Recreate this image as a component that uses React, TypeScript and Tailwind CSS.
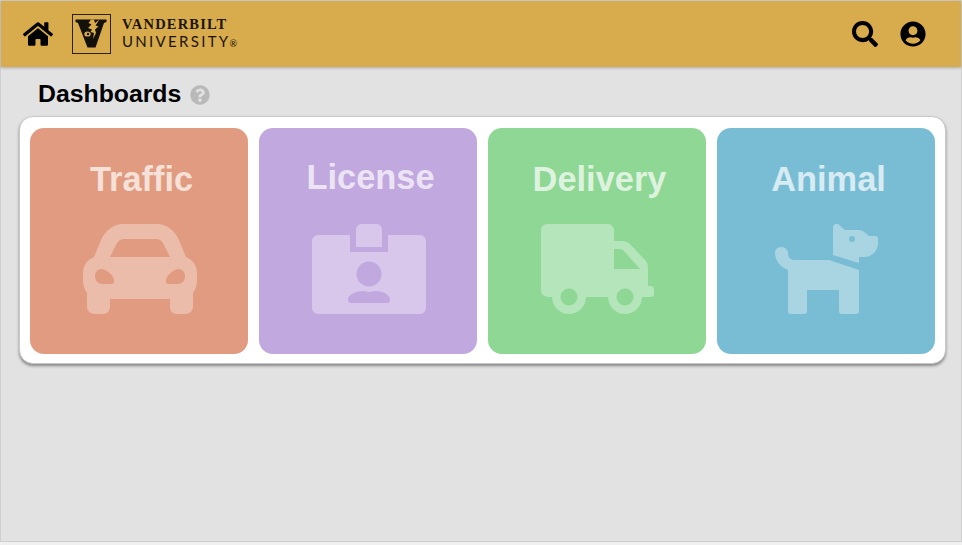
import React from "react";
import { FaHome, FaSearch, FaUserCircle, FaQuestionCircle } from "react-icons/fa";

const sans = "font-['Liberation_Sans',Arial,sans-serif]";

function VuLogo() {
  return (
    <div className="w-[39px] h-[40px] border-[1.5px] border-[#2a2110] shrink-0">
      <svg width="36" height="37" viewBox="0 0 36 37">
        <path d="M2.500 4.500H33.500V7L31 8L22.500 32.500H14.500L5 8L2.500 7Z" fill="#14100a" />
        <path d="M18 4.500L15.500 8L18.500 9.500L15 13L19 14.500L17.500 17L21 18L20 24L23 18L22 14.500L25.500 11.500L22.500 10.500L26.500 4.500L22 8L21 4.500Z" fill="#D8AB4C" />
        <ellipse cx="14.500" cy="19" rx="3.200" ry="2.600" fill="#D8AB4C" />
        <circle cx="15" cy="19" r="1.200" fill="#14100a" />
      </svg>
    </div>
  );
}

function CarIcon() {
  return (
    <svg width="114" height="90" viewBox="0 0 114 90">
      <path
        fillRule="evenodd"
        fill="#ECBCAB"
        d="M40 0H74C84 0 92 7 96 16L103 33C110 36 114 42 114 49V56C114 62 112 66 110 69V82C110 87 107 90 102 90H94C89 90 87 87 87 82V75H27V82C27 87 24 90 20 90H12C7 90 4 87 4 82V69C2 66 0 62 0 56V49C0 42 4 36 11 33L18 16C22 7 30 0 40 0ZM27 33H87L81 21C79 17 77 15 72 15H42C37 15 35 17 33 21ZM12 52C12 48 15 45 18 45C24 45 31 52 31 57C31 59 30 60 28 60H20C15 60 12 57 12 52ZM102 52C102 48 99 45 96 45C90 45 83 52 83 57C83 59 84 60 86 60H94C99 60 102 57 102 52Z"
      />
    </svg>
  );
}

function BadgeIcon() {
  return (
    <svg width="114" height="90" viewBox="0 0 114 90">
      <path
        fillRule="evenodd"
        fill="#D8C6EB"
        d="M6 11H38V28H76V11H108C111 11 114 14 114 17V84C114 87 111 90 108 90H6C3 90 0 87 0 84V17C0 14 3 11 6 11ZM57 37.500A12.500 12.500 0 1 0 57 62.500A12.500 12.500 0 1 0 57 37.500ZM36 75C37 70 45 67 50 67C53 67 55 68 57 68C59 68 61 67 64 67C70 67 77 70 78 75C78 78 77 79 75 79H39C37 79 36 78 36 75ZM50 0H64C68 0 70 3 70 6V23H44V6C44 3 46 0 50 0Z"
      />
    </svg>
  );
}

function TruckIcon() {
  return (
    <svg width="114" height="90" viewBox="0 0 114 90">
      <path
        fill="#B5E5BA"
        d="M6 0H67C70 0 73 3 73 6V17H80C84 17 87 18 89 20L104 36C106 38 107 40 107 44V62H110C112 62 113 64 113 66V69C113 72 112 73 110 73H101A17 17 0 0 1 67 73H45A17 17 0 0 1 11 73H8C3 73 0 70 0 66V6C0 3 3 0 6 0Z"
      />
      <path fill="#8FD794" d="M73 25H79C81 25 82 26 83 27L99 45H73Z" />
      <circle cx="28" cy="73" r="8.500" fill="#8FD794" />
      <circle cx="84" cy="73" r="8.500" fill="#8FD794" />
    </svg>
  );
}

function DogIcon() {
  return (
    <svg width="104" height="90" viewBox="0 0 104 90">
      <path
        fillRule="evenodd"
        fill="#A9D5E3"
        d="M58 4C58 1 60 -1 63 0L70 6H84C87 6 91 9 94 12H101C102 12 103 13 103 14V19C103 27 97 33 89 33H84V39L58 31ZM77 12A3 3 0 1 0 77 18A3 3 0 1 0 77 12Z"
      />
      <path
        fill="#A9D5E3"
        d="M54 36L84 46V87C84 89 83 90 81 90H67C65 90 64 89 64 87V66H32V87C32 89 31 90 29 90H16C14 90 13 89 13 87V46C5 43 0 36 0 29C0 25 3 23 6.500 23C10 23 13 26 13 29C13 33 15 36 20 36Z"
      />
    </svg>
  );
}

const cards = [
  { title: "Traffic", bg: "bg-[#E09B80]", text: "text-[#F6E1D9]", top: "pt-[34px] h-[96px]", icon: <CarIcon /> },
  { title: "License", bg: "bg-[#C1A8DE]", text: "text-[#ECE4F5]", top: "pt-[32px] h-[96px]", icon: <BadgeIcon /> },
  { title: "Delivery", bg: "bg-[#8FD794]", text: "text-[#DDF3DF]", top: "pt-[34px] h-[96px]", icon: <TruckIcon /> },
  { title: "Animal", bg: "bg-[#79BDD5]", text: "text-[#D7EBF2]", top: "pt-[34px] h-[96px]", icon: <DogIcon /> },
];

export default function App() {
  return (
    <div className="w-[962px] h-[545px] overflow-hidden bg-[#F0F0F0]">
      <div className={`h-[542px] border border-[#CFCFCF] bg-[#E2E2E2] ${sans}`}>
        <header className="h-[66px] bg-[#D8AB4C] shadow-[0_1px_3px_rgba(0,0,0,0.25)] flex items-center justify-between pl-[22px] pr-[35px]">
          <div className="flex items-center">
            <FaHome size={30} color="#000" />
            <div className="ml-[19px]">
              <VuLogo />
            </div>
            <div className="ml-[11px] flex flex-col text-[#1a1408]">
              <span className="font-['Liberation_Serif',serif] font-bold text-[14.500px] leading-[16px] tracking-[1.200px]">VANDERBILT</span>
              <span className="font-['Lato',sans-serif] text-[15px] leading-[16px] tracking-[2.300px] mt-[1px]">
                UNIVERSITY<span className="text-[9px] tracking-normal -ml-[1px]">®</span>
              </span>
            </div>
          </div>
          <div className="flex items-center gap-[22px]">
            <FaSearch size={26} color="#000" />
            <FaUserCircle size={26} color="#000" />
          </div>
        </header>

        <div className="h-[49px] pl-[37px] flex items-center gap-[9px] pt-[6px]">
          <h1 className="text-[24.800px] font-bold text-black leading-none">Dashboards</h1>
          <FaQuestionCircle size={20} color="#B9B9B9" />
        </div>

        <section className="ml-[18px] w-[927px] h-[248px] bg-white rounded-[14px] border border-[#C8C8C8] shadow-[0_2px_3px_rgba(0,0,0,0.4)] grid grid-cols-4 gap-[11px] px-[10px] pt-[11px] pb-[9px]">
          {cards.map((c) => (
            <div key={c.title} className={`${c.bg} rounded-[14px] flex flex-col items-center pl-[2px]`}>
              <div className={`${c.top} ${c.text} text-[34.400px] font-bold leading-[35px] pl-[3px]`}>{c.title}</div>
              {c.icon}
            </div>
          ))}
        </section>
      </div>
    </div>
  );
}
